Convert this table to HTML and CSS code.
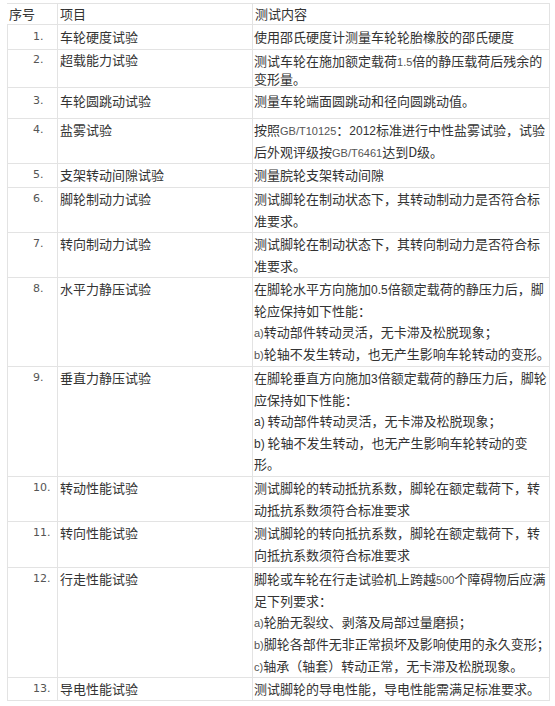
FILE: index.html
```html
<!DOCTYPE html>
<html lang="zh">
<head>
<meta charset="utf-8">
<title>测试项目</title>
<link rel="stylesheet" href="styles.css">
</head>
<body>
<table class="spec">
  <colgroup>
    <col class="c-no">
    <col class="c-item">
    <col class="c-desc">
  </colgroup>
  <thead>
    <tr class="head">
      <th class="first">序号</th>
      <th>项目</th>
      <th>测试内容</th>
    </tr>
  </thead>
  <tbody>
    <tr class="r1">
      <td class="no">1.</td>
      <td>车轮硬度试验</td>
      <td>使用邵氏硬度计测量车轮轮胎橡胶的邵氏硬度</td>
    </tr>
    <tr class="r2">
      <td class="no">2.</td>
      <td>超载能力试验</td>
      <td>测试车轮在施加额定载荷<span class="lat">1.5</span>倍的静压载荷后残余的<br>变形量。</td>
    </tr>
    <tr class="r3">
      <td class="no">3.</td>
      <td>车轮圆跳动试验</td>
      <td>测量车轮端面圆跳动和径向圆跳动值。</td>
    </tr>
    <tr class="r4">
      <td class="no">4.</td>
      <td>盐雾试验</td>
      <td>按照<span class="lat">GB/T10125</span>：<span class="num">2012</span>标准进行中性盐雾试验，试验<br>后外观评级按<span class="lat">GB/T6461</span>达到D级。</td>
    </tr>
    <tr class="r5">
      <td class="no">5.</td>
      <td>支架转动间隙试验</td>
      <td>测量脘轮支架转动间隙</td>
    </tr>
    <tr class="r6">
      <td class="no">6.</td>
      <td>脚轮制动力试验</td>
      <td>测试脚轮在制动状态下，其转动制动力是否符合标<br>准要求。</td>
    </tr>
    <tr class="r7">
      <td class="no">7.</td>
      <td>转向制动力试验</td>
      <td>测试脚轮在制动状态下，其转向制动力是否符合标<br>准要求。</td>
    </tr>
    <tr class="r8">
      <td class="no">8.</td>
      <td>水平力静压试验</td>
      <td>在脚轮水平方向施加<span class="num">0.5</span>倍额定载荷的静压力后，脚<br>轮应保持如下性能：<br><span class="lat">a)</span>转动部件转动灵活，无卡滞及松脱现象；<br><span class="lat">b)</span>轮轴不发生转动，也无产生影响车轮转动的变形。</td>
    </tr>
    <tr class="r9">
      <td class="no">9.</td>
      <td>垂直力静压试验</td>
      <td>在脚轮垂直方向施加<span class="num">3</span>倍额定载荷的静压力后，脚轮<br>应保持如下性能：<br><span class="num">a)</span> 转动部件转动灵活，无卡滞及松脱现象；<br><span class="num">b)</span> 轮轴不发生转动，也无产生影响车轮转动的变<br>形。</td>
    </tr>
    <tr class="r10">
      <td class="no">10.</td>
      <td>转动性能试验</td>
      <td>测试脚轮的转动抵抗系数，脚轮在额定载荷下，转<br>动抵抗系数须符合标准要求</td>
    </tr>
    <tr class="r11">
      <td class="no">11.</td>
      <td>转向性能试验</td>
      <td>测试脚轮的转向抵抗系数，脚轮在额定载荷下，转<br>向抵抗系数须符合标准要求</td>
    </tr>
    <tr class="r12">
      <td class="no">12.</td>
      <td>行走性能试验</td>
      <td>脚轮或车轮在行走试验机上跨越<span class="lat">500</span>个障碍物后应满<br>足下列要求：<br><span class="lat">a)</span>轮胎无裂纹、剥落及局部过量磨损；<br><span class="lat">b)</span>脚轮各部件无非正常损坏及影响使用的永久变形；<br><span class="lat">c)</span>轴承（轴套）转动正常，无卡滞及松脱现象。</td>
    </tr>
    <tr class="r13">
      <td class="no">13.</td>
      <td>导电性能试验</td>
      <td>测试脚轮的导电性能，导电性能需满足标准要求。</td>
    </tr>
  </tbody>
</table>
</body>
</html>
```

FILE: styles.css
```css
html, body {
  margin: 0;
  padding: 0;
  background: #ffffff;
}

body {
  font-family: "Noto Sans CJK SC", "Noto Sans", sans-serif;
  font-size: 13px;
  color: #333333;
}

.spec {
  margin: 3px 0 0 7px;
  width: 542px;
  border-collapse: collapse;
  table-layout: fixed;
}

.c-no { width: 50px; }
.c-item { width: 195px; }
.c-desc { width: 297px; }

.spec th,
.spec td {
  border: 1px solid #e3e3e3;
  padding: 0 0 0 2px;
  line-height: 22px;
  vertical-align: top;
  text-align: left;
  font-weight: normal;
  white-space: nowrap;
  overflow: hidden;
}

.spec td:last-child {
  padding-left: 1px;
}

.spec th.first {
  border-left-color: transparent;
  padding-left: 1px;
}

.spec td.no {
  padding-left: 25px;
  font-family: "DejaVu Sans", "Liberation Sans", sans-serif;
  font-size: 11px;
  color: #555555;
}

.lat {
  font-family: "Liberation Sans", sans-serif;
  font-size: 11px;
  line-height: 1;
  color: #555555;
}

.num {
  font-family: "Liberation Sans", sans-serif;
  font-size: 12px;
  line-height: 1;
  color: #333333;
}

.head { height: 21px; }
.head th { line-height: 20px; }
.r1 { height: 25px; }
.r1 td { padding-top: 1px; }
.r2 { height: 37px; }
.r2 td { line-height: 18px; padding-top: 1px; }
.r2 td:last-child { padding-top: 2px; line-height: 17.5px; }
.r3 { height: 31px; }
.r3 td { padding-top: 2px; }
.r4 { height: 45px; }
.r5 { height: 24px; }
.r6 { height: 45px; }
.r7 { height: 45px; }
.r8 { height: 89px; }
.r8 td { line-height: 21.7px; }
.r9 { height: 110px; }
.r9 td { line-height: 21.5px; }
.r10 { height: 45px; }
.r11 { height: 46px; }
.r12 { height: 110px; }
.r12 td { line-height: 21.7px; }
.r13 { height: 22px; }
```
